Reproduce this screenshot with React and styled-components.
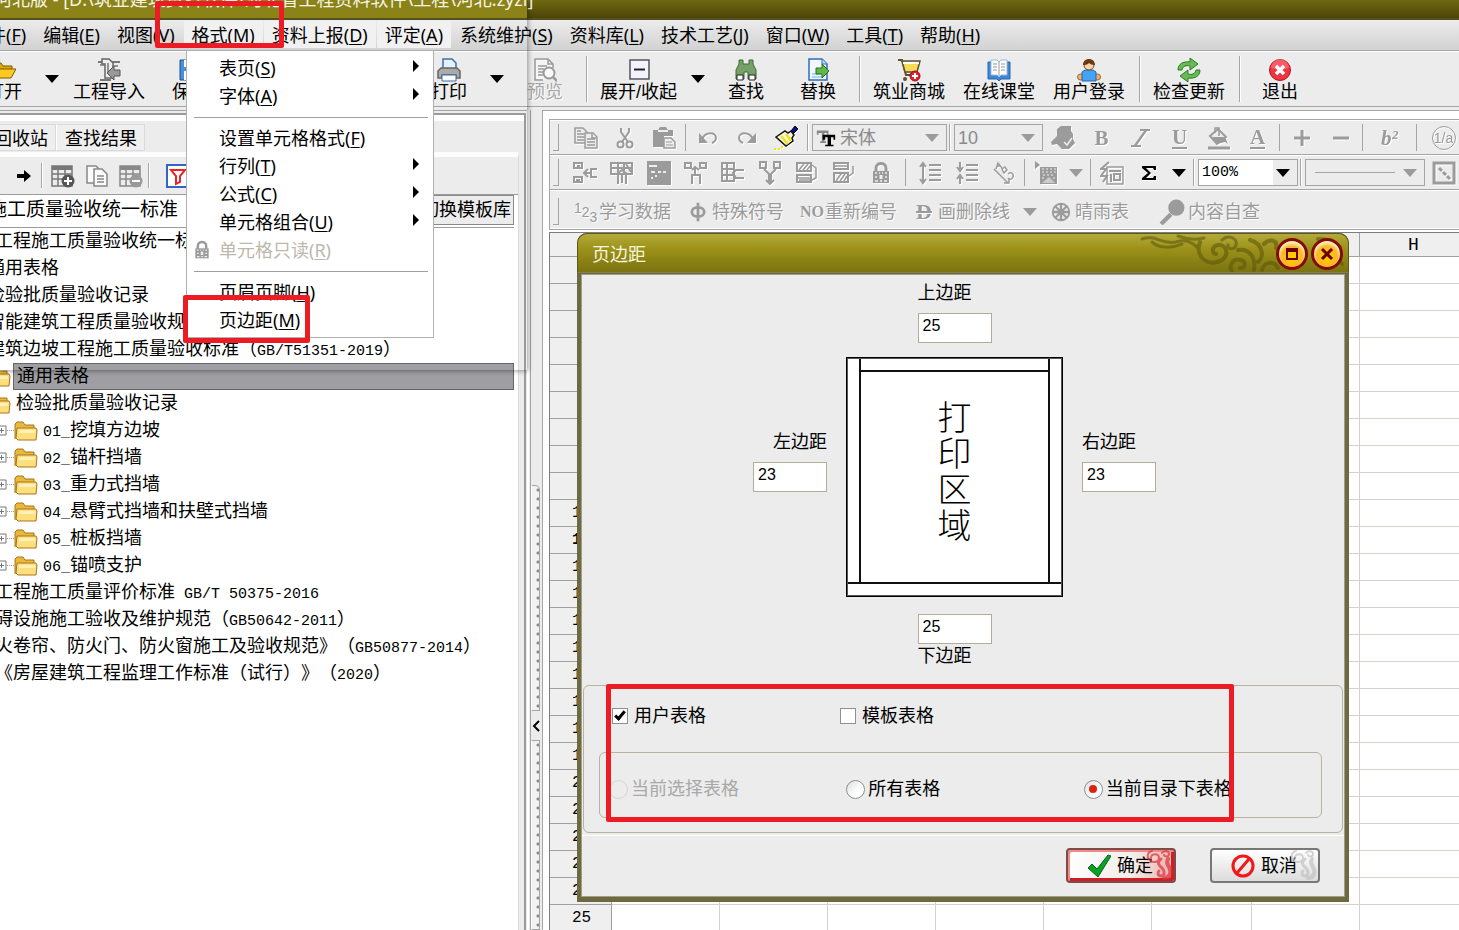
import { useState } from 'react';
import styled, { createGlobalStyle, css } from 'styled-components';

const GRAY = '#9b9b9b';
const sansFont = '"Noto Sans", "Noto Sans CJK SC", sans-serif';
const songFont = '"Liberation Sans", "Noto Sans CJK SC", sans-serif';
const monoFont = '"Liberation Mono", "Noto Sans CJK SC", monospace';

const glyphs = {
  open: (
    <>
      <path d='M1 20V5h8l2 3h9v4' fill='#e0a800' stroke='#7a5a00' />
      <path d='M1 20l4-9h19l-5 9z' fill='#ffc91f' stroke='#7a5a00' />
    </>
  ),
  importer: (
    <>
      <path d='M1 4h22M3 22h11' stroke='#777' strokeWidth='2' fill='none' />
      <path d='M5 1h7l4 4v15H8V6H5z' fill='#eee' stroke='#666' strokeWidth='1.5' />
      <path d='M11 5v9M3 7h5M16 8h5' stroke='#777' strokeWidth='1.5' />
      <path d='M23 12h-6V8l-7 7 7 7v-4h6z' fill='#999' stroke='#555' />
    </>
  ),
  save: (
    <>
      <path d='M2 2h17l3 3v17H2z' fill='#4a90d9' stroke='#1d4f93' />
      <path d='M6 2h11v7H6zM6 13h12v9H6z' fill='#fff' />
      <path d='M8 16h8M8 19h8' stroke='#3aa335' strokeWidth='2' />
    </>
  ),
  printer: (
    <>
      <path d='M6 11V1h9l4 4v6' fill='#e5f1fc' stroke='#3c6ea8' strokeWidth='1.5' />
      <path d='M1 20V13l3-3h16l3 3v7h-4v-3H5v3z' fill='#aaa' stroke='#666' strokeWidth='1.5' />
      <path d='M5 17h14v6H5z' fill='#f6fbff' stroke='#3c6ea8' />
    </>
  ),
  preview: (
    <g fill='none' stroke='#999' strokeWidth='1.5'>
      <path d='M10 22H2V1h13l5 5v4' fill='#f6f6f6' />
      <path d='M15 1v5h5M5 8h9M5 11h6M5 14h5M5 17h5' />
      <circle cx='16' cy='15' r='5.5' fill='#fafafa' strokeWidth='2' />
      <path d='M20 19l4 4' strokeWidth='2.5' />
    </g>
  ),
  collapse: (
    <>
      <path d='M3 2h19v19H3z' fill='#f3f3ff' stroke='#555' strokeWidth='1.5' />
      <path d='M7 11.5h11' stroke='#222' strokeWidth='2' />
    </>
  ),
  find: (
    <>
      <path d='M5 2h4v4h6V2h4v4l3 6v9h-8v-7h-4v7H2v-9l3-6z' fill='#76a26a' stroke='#41663a' />
      <path d='M3 17h6v5H3zM15 17h6v5h-6z' fill='#fff' stroke='#222' />
    </>
  ),
  replace: (
    <>
      <path d='M3 1h13l5 5v16H3z' fill='#f0f7ff' stroke='#2f6db5' strokeWidth='1.5' />
      <path d='M16 1v5h5' fill='#bcd9f7' stroke='#2f6db5' />
      <path d='M6 16h8M6 19h10' stroke='#a9d5f3' strokeWidth='2' />
      <path d='M10 10h6V6l7 7-7 7v-4h-6z' fill='#62b846' stroke='#24731c' />
    </>
  ),
  cart: (
    <>
      <path d='M1 2h4l4 15h12' fill='none' stroke='#5f5130' strokeWidth='2' />
      <path d='M5 3h18l-3 11H8z' fill='#f7dc58' stroke='#5f5130' strokeWidth='1.5' />
      <path d='M6 5h16' stroke='#fff' strokeWidth='2' />
      <circle cx='8' cy='21' r='2' fill='#5f5130' />
      <circle cx='18' cy='18' r='5' fill='#e3202b' stroke='#97101a' />
      <path d='M18 15v6M15 18h6' stroke='#fff' strokeWidth='2' />
    </>
  ),
  book: (
    <>
      <path d='M1 4h22v17H14l-2 2-2-2H1z' fill='#3d86d6' stroke='#2768b4' />
      <path d='M4 2h6l2 2 2-2h6v15h-6l-2 2-2-2H4z' fill='#fff' stroke='#9cb8d6' />
      <path d='M6 6h4M6 9h4M6 12h4M14 6h4M14 9h4M14 12h4M12 4v14' stroke='#999' />
    </>
  ),
  user: (
    <>
      <circle cx='3.5' cy='19' r='3' fill='#f0b16d' stroke='#a86526' />
      <circle cx='20.5' cy='19' r='3' fill='#f0b16d' stroke='#a86526' />
      <path d='M5 14l3-2h8l3 2v9H5z' fill='#45a3f5' stroke='#1c68ad' />
      <circle cx='12' cy='7' r='5' fill='#f8d5ab' stroke='#7d4a1c' />
      <path d='M6 7c0-8 12-8 12 0-3 0-5-1-6-2-2 2-4 2-6 2z' fill='#6b3a12' />
    </>
  ),
  refresh: (
    <g fill='#67bb53' stroke='#2c7a24' strokeLinejoin='round'>
      <path d='M1 12c0-6 5-9 12-8V0l8 6-8 6V8c-4-1-7 0-8 4z' />
      <path d='M23 12c0 6-5 9-12 8v4l-8-6 8-6v4c4 1 7 0 8-4z' />
    </g>
  ),
  exit: (
    <>
      <circle cx='12' cy='12' r='10.5' fill='#ef3340' stroke='#a91823' />
      <path d='M3 10a9 9 0 0118 0q-9 3-18 0z' fill='#ff7a80' opacity='.6' />
      <path d='M8 8l8 8M16 8l-8 8' stroke='#fff' strokeWidth='3.5' />
    </>
  ),
  arrow: <path d='M5 10h7V6l7 6-7 6v-4H5z' fill='#000' />,
  tableAdd: (
    <>
      <path d='M1 2h20v20H1zM1 5h20M1 10h20M1 15h20M7 6v16M14 6v16' fill='none' stroke='#777' strokeWidth='1.5' />
      <path d='M1 2h20v4H1z' fill='#777' />
      <circle cx='17' cy='17' r='6.5' fill='#555' />
      <path d='M17 13v8M13 17h8' stroke='#fff' strokeWidth='2' />
    </>
  ),
  tableRemove: (
    <>
      <path d='M1 2h20v20H1zM1 5h20M1 10h20M1 15h20M7 6v16M14 6v16' fill='none' stroke='#888' strokeWidth='1.5' />
      <path d='M1 2h20v4H1z' fill='#888' />
      <circle cx='17' cy='17' r='6.5' fill='#999' />
      <path d='M13 17h8' stroke='#fff' strokeWidth='2' />
    </>
  ),
  pages: (
    <g fill='#fafafa' stroke='#888' strokeWidth='1.5'>
      <path d='M2 2h9l3 3v14H2z' />
      <path d='M9 5h8l5 5v12H9z' />
      <path d='M12 12h7M12 15h7M12 18h7' />
    </g>
  ),
  filter: (
    <>
      <path d='M1 1h22v22H1z' fill='#fff' stroke='#3465c0' strokeWidth='2' />
      <path d='M5 6h14l-5 6v6l-4 2v-8z' fill='#fff' stroke='#e22' strokeWidth='2' />
    </>
  ),
  folder: (
    <>
      <path d='M1 20V5l2-2h6l2 3h9v3' fill='#e9b93c' stroke='#a8741a' />
      <path d='M3 9h19l1 2-1 10H4L2 19z' fill='#ffdf7d' stroke='#a8741a' />
      <path d='M5 11h16v3H5z' fill='#fff1b8' />
    </>
  ),
  lock: (
    <>
      <path d='M7 11V7c0-6 10-6 10 0v4' fill='none' stroke={GRAY} strokeWidth='3' />
      <path d='M4 10h16v12H4z' fill={GRAY} />
      <path d='M6 12h2m2 0h1m2 0h1m2 0h2M6 20h3m2 0h2m2 0h3M6 16h2m8 0h2' stroke='#eee' strokeWidth='1.5' />
      <path d='M12 14v4' stroke='#eee' strokeWidth='3' />
    </>
  ),
  copy: (
    <g fill='#ececec' stroke={GRAY} strokeWidth='1.5'>
      <path d='M1 2h8l4 4v11H1z' />
      <path d='M3 8h7M3 11h7M3 5h4M3 14h7' />
      <path d='M11 7h8l4 4v11H11z' />
      <path d='M13 13h8M13 16h8M13 19h8M18 7v5h5' />
    </g>
  ),
  cut: (
    <g fill='none' stroke={GRAY} strokeWidth='2'>
      <path d='M8 2v4l7 10M16 2v4L9 16' />
      <circle cx='7.5' cy='18.5' r='3' />
      <circle cx='16.5' cy='18.5' r='3' />
    </g>
  ),
  paste: (
    <>
      <path d='M1 4h5l2-3h6l2 3h5v6h-9v11H1z' fill={GRAY} />
      <path d='M6 5h10' stroke='#eee' strokeWidth='2' />
      <path d='M12 12h7l4 4v6H12z' fill='#eee' stroke={GRAY} strokeWidth='1.5' />
      <path d='M14 16h6M14 19h7' stroke={GRAY} />
    </>
  ),
  undo: (
    <>
      <path d='M6 13C10 5 20 6 20 12c0 3-2 4-4 5' fill='none' stroke={GRAY} strokeWidth='2' />
      <path d='M3 7v10h9z' fill={GRAY} />
    </>
  ),
  redo: (
    <>
      <path d='M18 13C14 5 4 6 4 12c0 3 2 4 4 5' fill='none' stroke={GRAY} strokeWidth='2' />
      <path d='M21 7v10h-9z' fill={GRAY} />
    </>
  ),
  brush: (
    <>
      <path d='M17 5l4-5 3 3-5 5z' fill='#0a0a8c' stroke='#000' />
      <path d='M2 11l9-6 3 2 3-2 3 4-2 3 1 3-7 5z' fill='#f7f7e0' stroke='#111' strokeWidth='1.5' />
      <path d='M7 10l7 8M12 8l5 7' stroke='#eee21a' strokeWidth='2.5' />
      <path d='M0 23h2m2 0h2m1-2h2' stroke='#f3e600' strokeWidth='2' />
    </>
  ),
  typeface: (
    <>
      <path d='M1 3h14v5h-2V6h-3v10h2v2H5v-2h2V6H3v2H1z' fill='#888' />
      <path d='M8 8h15v6h-2v-3h-3v9h3v2h-10v-2h3v-9h-3v3H8z' fill='#000' />
    </>
  ),
  hand: (
    <>
      <path d='M0 16l6-6V3l4-3h10v5l2 3v5l2 4-6 6h-7l-5-5-5 1z' fill={GRAY} />
      <path d='M13 16l3 3 5-7' fill='none' stroke='#eee' strokeWidth='1.5' />
    </>
  ),
  bucket: (
    <>
      <path d='M3 10l8-7 8 8-9 7z' fill='#eee' stroke={GRAY} strokeWidth='2' />
      <path d='M8 7V2h4v8' fill='none' stroke={GRAY} strokeWidth='1.5' />
      <path d='M5 11h13l3 7-3-2-8 2z' fill={GRAY} />
      <path d='M1 22h22' stroke={GRAY} strokeWidth='3' />
    </>
  ),
  plus: <path d='M12 4v16M4 12h16' stroke={GRAY} strokeWidth='3' />,
  minus: <path d='M4 12h16' stroke={GRAY} strokeWidth='3' />,
  italic: <path d='M11 3h10v2h-3L8 19h4v2H2v-2h3L15 5h-4z' fill={GRAY} />,
  insertCell: (
    <g fill='none' stroke={GRAY} strokeWidth='2'>
      <path d='M1 2h8v5H1zM1 16h8v5H1zM3 19h4M4 5h3M11 12h7M15 8l-4 4 4 4M24 8h-6v8h6' />
    </g>
  ),
  splitCell: (
    <g fill='none' stroke={GRAY} strokeWidth='2'>
      <path d='M1 2h21v11H1zM1 7h21M8 2v11M14 2v11M8 23V12l4-3 4 3v11M12 13v9M16 3l5 8' />
    </g>
  ),
  formBox: (
    <>
      <path d='M0 0h24v24H0z' fill={GRAY} />
      <path d='M2 5h8M4 11h4m3 0h3m2 0h3M4 17h2m2-2h2' stroke='#eee' strokeWidth='2' />
    </>
  ),
  colUp: (
    <g fill='none' stroke={GRAY} strokeWidth='2'>
      <path d='M1 2h6v5H1zM16 2h6v5h-6zM11 6v9M8 9l3-3 4 3M8 23v-9h8v9' />
    </g>
  ),
  gridLeft: (
    <g fill='none' stroke={GRAY} strokeWidth='2'>
      <path d='M1 2h12v18H1zM6 2v18M1 8h12M1 14h12M23 9h-8l-3 3 3 5h8' />
    </g>
  ),
  colDown: (
    <g fill='none' stroke={GRAY} strokeWidth='2'>
      <path d='M2 1h6v6H2zM16 1h6v6h-6zM6 8l5 5v9M18 8l-5 5v9M8 19l4 4 4-4' />
    </g>
  ),
  rowsUp: (
    <>
      <path d='M2 2h14v8H2zM2 14h14v7H2z' fill='none' stroke={GRAY} strokeWidth='2' />
      <path d='M4 9l5-6M8 9l5-6M12 9l3-4M3 17h12M4 19h12' stroke={GRAY} strokeWidth='1.5' />
      <path d='M17 4l4 3v10l-4 2' fill='none' stroke={GRAY} strokeWidth='1.5' />
    </>
  ),
  rowsDown: (
    <>
      <path d='M2 2h14v6H2zM2 12h14v9H2z' fill='none' stroke={GRAY} strokeWidth='2' />
      <path d='M3 5h12M4 20l5-7M8 20l5-7M12 20l3-5' stroke={GRAY} strokeWidth='1.5' />
      <path d='M17 15l4-3V5' fill='none' stroke={GRAY} strokeWidth='1.5' />
    </>
  ),
  spacingOut: (
    <g fill='none' stroke={GRAY} strokeWidth='2'>
      <path d='M5 3v18M2 6l3-4 3 4M2 18l3 4 3-4M11 4h12M11 9h12M11 14h12M11 19h12' />
    </g>
  ),
  spacingIn: (
    <g fill='none' stroke={GRAY} strokeWidth='2'>
      <path d='M5 1v8M2 6l3 4 3-4M5 23v-8M2 18l3-4 3 4M11 4h12M11 9h12M11 14h12M11 19h12' />
    </g>
  ),
  slant: (
    <>
      <path d='M2 8l14 14M17 17v5h-5' fill='none' stroke={GRAY} strokeWidth='1.5' />
      <path d='M4 8l2-6 4 5M5 5h4M10 8l3-2 2 3-3 3zM16 13c3-3 6 0 5 3s-4 3-5 1' fill='none' stroke={GRAY} strokeWidth='1.5' />
    </>
  ),
  picture: (
    <>
      <path d='M1 0l5 4-5 4z' fill={GRAY} />
      <path d='M6 6h17v17H6z' fill={GRAY} />
      <path d='M8 8h2m2 0h2m2 0h2m2 0h2M8 11h2m2 0h2m2 0h2m2 0h2M9 14h2m2 0h2m2 0h2M8 17h2m9 0h2' stroke='#eee' />
      <path d='M8 22l7-6 6 6' fill='#ccc' />
    </>
  ),
  formula: (
    <>
      <path d='M7 6h16v17H7z' fill='none' stroke={GRAY} strokeWidth='1.5' />
      <path d='M9 1L1 8h5l-5 7h6l-4 6M9 10h12M14 13h6v6h-6zM11 13v8' fill='none' stroke={GRAY} strokeWidth='2' />
    </>
  ),
  sigma: <path d='M5 5h14v4h-2l-1-2H9l5 5-5 5h7l1-2h2v4H5v-2l6-5-6-5z' fill='#000' />,
  diagonal: (
    <>
      <path d='M2 2h20v20H2z' fill='none' stroke={GRAY} strokeWidth='3' />
      <path d='M7 7l3 3m1 1l3 3m1 1l3 3' stroke={GRAY} strokeWidth='3' />
    </>
  ),
  phi: <path d='M12 2v20M12 7c-9 0-9 10 0 10s9-10 0-10z' fill='none' stroke={GRAY} strokeWidth='3' />,
  ball: (
    <>
      <circle cx='12' cy='12' r='9' fill='none' stroke={GRAY} strokeWidth='2' />
      <path d='M12 3v18M3 12h18M6 6l12 12M18 6L6 18' stroke={GRAY} strokeWidth='2.5' />
    </>
  ),
  magnifier: (
    <>
      <circle cx='16' cy='8' r='7.5' fill={GRAY} />
      <path d='M11 14l-9 9' stroke={GRAY} strokeWidth='4' />
    </>
  ),
  check: <path d='M1 14l4-4 5 5L21 1l3 1-13 21z' fill='#0aa31a' stroke='#0b5f3a' />,
  forbid: (
    <g fill='none' stroke='#f01818' strokeWidth='3'>
      <circle cx='12' cy='12' r='10' />
      <path d='M18 5L6 19' />
    </g>
  ),
};

const Icon = ({ name, size = 24 }) => (
  <svg width={size} height={size} viewBox='0 0 24 24' aria-hidden='true'>
    {glyphs[name]}
  </svg>
);

const Caret = ({ color = '#000' }) => (
  <svg width='14' height='8' viewBox='0 0 14 8' aria-hidden='true'>
    <path d='M0 0h14L7 8z' fill={color} />
  </svg>
);

const menus = [
  ['文件', 'F'],
  ['编辑', 'E'],
  ['视图', 'V'],
  ['格式', 'M', true],
  ['资料上报', 'D', true],
  ['评定', 'A', true],
  ['系统维护', 'S'],
  ['资料库', 'L'],
  ['技术工艺', 'J'],
  ['窗口', 'W'],
  ['工具', 'T'],
  ['帮助', 'H'],
];

const formatMenu = [
  { text: '表页', hot: 'S', sub: true },
  { text: '字体', hot: 'A', sub: true },
  null,
  { text: '设置单元格格式', hot: 'F' },
  { text: '行列', hot: 'T', sub: true },
  { text: '公式', hot: 'C', sub: true },
  { text: '单元格组合', hot: 'U', sub: true },
  { text: '单元格只读', hot: 'R', disabled: true, icon: 'lock' },
  null,
  { text: '页眉页脚', hot: 'H' },
  { text: '页边距', hot: 'M' },
];

const treeRows = [
  { depth: 0, text: '建筑工程施工质量验收统一标准' },
  { depth: 1, text: '通用表格' },
  { depth: 1, text: '检验批质量验收记录' },
  { depth: 1, text: '智能建筑工程质量验收规范' },
  { depth: 1, text: '建筑边坡工程施工质量验收标准（GB/T51351-2019）' },
  { depth: 1, text: '通用表格', folder: true, selected: true },
  { depth: 1, text: '检验批质量验收记录', folder: true },
  { depth: 2, text: '01_挖填方边坡', folder: true, expander: true },
  { depth: 2, text: '02_锚杆挡墙', folder: true, expander: true },
  { depth: 2, text: '03_重力式挡墙', folder: true, expander: true },
  { depth: 2, text: '04_悬臂式挡墙和扶壁式挡墙', folder: true, expander: true },
  { depth: 2, text: '05_桩板挡墙', folder: true, expander: true },
  { depth: 2, text: '06_锚喷支护', folder: true, expander: true },
  { depth: 0, text: '建筑工程施工质量评价标准 GB/T 50375-2016' },
  { depth: 0, text: '无障碍设施施工验收及维护规范（GB50642-2011）' },
  { depth: 0, text: '《防火卷帘、防火门、防火窗施工及验收规范》（GB50877-2014）' },
  { depth: 0, text: '河北《房屋建筑工程监理工作标准（试行）》（2020）' },
];

const columns = ['A', 'B', 'C', 'D', 'E', 'F', 'G', 'H', 'I'];
const rowNumbers = Array.from({ length: 30 }, (_, i) => i + 1);

// half-width runs are set in the mono face so they take half a hanzi each
const MixedText = ({ children }) =>
  children.split(/([\x20-\x7e]+)/).map((part, i) => (i % 2 ? <HalfWidth key={i}>{part}</HalfWidth> : part));

const BigTool = ({ icon, label, disabled, className }) => (
  <BigButton type='button' disabled={disabled} className={className}>
    <Icon name={icon} />
    {label}
  </BigButton>
);

const DropArrow = ({ label, color }) => (
  <ArrowButton type='button' aria-label={label}>
    <Caret color={color} />
  </ArrowButton>
);

const Tool = ({ icon, label, children, wide }) => (
  <SmallButton type='button' aria-label={label} $wide={wide}>
    {icon ? <Icon name={icon} /> : children}
  </SmallButton>
);

const Field = ({ id, label, value, onChange, below, side, alignEnd }) => (
  <FieldBox $below={below} $side={side} $alignEnd={alignEnd}>
    <label htmlFor={id}>{label}</label>
    <input id={id} value={value} onChange={(e) => onChange(id, e.target.value)} autoComplete='off' />
  </FieldBox>
);

const MarginDialog = () => {
  const [margins, setMargins] = useState({ top: '25', left: '23', right: '23', bottom: '25' });
  const [userSheet, setUserSheet] = useState(true);
  const [templateSheet, setTemplateSheet] = useState(false);
  const [scope, setScope] = useState('folder');

  function handleMargin(id, value) {
    setMargins({ ...margins, [id]: value });
  }

  return (
    <Dialog role='dialog' aria-label='页边距'>
      <DialogTitle>
        <h2>页边距</h2>
        <svg className='cloud' width='210' height='38' viewBox='0 0 210 38' aria-hidden='true'>
          <g fill='none' stroke='#5f590c' strokeLinecap='round' opacity='.6'>
            <path d='M4 5c14-5 20 6 34 3 10-3 16 0 22 6' strokeWidth='3' />
            <path d='M14 8c8 7 20 6 30 2M40 2c10 4 18 4 26 2' strokeWidth='3' />
            <path d='M62 8c-6 16 10 26 22 18 8-6 4-16-4-15-6 1-7 8-2 9' strokeWidth='4' />
            <path d='M84 6c6-6 16-2 14 5-2 6-9 4-8 0' strokeWidth='3' />
            <path d='M94 38c-4-8 2-14 9-12 6 2 4 9-1 8M100 16c10-2 18 6 16 20' strokeWidth='4' />
            <path d='M112 6c14 4 14 18 8 22M124 36c2-8 12-10 16-2M126 10c6-6 14-4 12 4' strokeWidth='4' />
            <path d='M186 32c4-8 14-8 18-2M180 5c10 0 16 3 22 8' strokeWidth='4' />
          </g>
        </svg>
        <RoundButton type='button' aria-label='最大化'>
          <svg width='14' height='14' viewBox='0 0 14 14'>
            <path d='M2 2h10v10H2zM2 4h10' fill='none' stroke='#6b0000' strokeWidth='2' />
          </svg>
        </RoundButton>
        <RoundButton type='button' aria-label='关闭'>
          <svg width='14' height='14' viewBox='0 0 14 14'>
            <path d='M2 2l10 10M12 2L2 12' stroke='#6b0000' strokeWidth='3' />
          </svg>
        </RoundButton>
      </DialogTitle>
      <DialogBody>
        <MarginGrid>
          <div />
          <Field id='top' label='上边距' value={margins.top} onChange={handleMargin} />
          <div />
          <Field id='left' label='左边距' value={margins.left} onChange={handleMargin} side alignEnd />
          <PaperPreview>
            <div className='strip left' />
            <div className='strip top' />
            <div className='strip right' />
            <div className='area'>
              <span>打印区域</span>
            </div>
            <div className='strip bottom' />
          </PaperPreview>
          <Field id='right' label='右边距' value={margins.right} onChange={handleMargin} side />
          <div />
          <Field id='bottom' label='下边距' value={margins.bottom} onChange={handleMargin} below />
          <div />
        </MarginGrid>
        <Group>
          <CheckRow>
            <Choice>
              <input type='checkbox' checked={userSheet} onChange={() => setUserSheet(!userSheet)} />
              用户表格
            </Choice>
            <Choice>
              <input type='checkbox' checked={templateSheet} onChange={() => setTemplateSheet(!templateSheet)} />
              模板表格
            </Choice>
          </CheckRow>
          <RadioGroup>
            <Choice $disabled>
              <input type='radio' name='scope' disabled />
              当前选择表格
            </Choice>
            <Choice>
              <input type='radio' name='scope' checked={scope === 'all'} onChange={() => setScope('all')} />
              所有表格
            </Choice>
            <Choice>
              <input type='radio' name='scope' checked={scope === 'folder'} onChange={() => setScope('folder')} />
              当前目录下表格
            </Choice>
          </RadioGroup>
        </Group>
        <DialogFooter>
          <DialogButton type='button' $primary>
            <Icon name='check' />
            确定
            <Curl color='#d8323a' />
          </DialogButton>
          <DialogButton type='button'>
            <Icon name='forbid' />
            取消
            <Curl color='#c2c2c2' />
          </DialogButton>
        </DialogFooter>
      </DialogBody>
    </Dialog>
  );
};

const Curl = ({ color }) => (
  <svg className='curl' width='30' height='30' viewBox='0 0 30 30' aria-hidden='true'>
    <g fill='none' stroke={color} strokeLinecap='round'>
      <path d='M7 8c0-5 8-5 8 0 0 4-5 5-8 3-5-3-4-9 1-10' strokeWidth='2' />
      <path d='M18 3c2-3 7-2 7 1s-4 3-5 1' strokeWidth='2' />
      <path d='M17 9c-4 3-3 6 1 9 3 3 3 8-1 8-3 0-4-3-2-5' strokeWidth='3' />
      <path d='M24 9c-2 3-1 5 1 8 3 5 1 11-5 11' strokeWidth='4' />
    </g>
  </svg>
);

const App = () => {
  const [font, setFont] = useState('宋体');
  const [zoom, setZoom] = useState('100%');

  return (
    <Shell>
      <GlobalStyle />
      <TitleBar>
        <h1>河北版 - [D:\筑业建筑资料软件\河北省工程资料软件\工程\河北.zyzl]</h1>
      </TitleBar>
      <MenuBar>
        {menus.map(([text, hot, lit]) => (
          <MenuButton key={hot} type='button' $lit={lit}>
            {text}(<u>{hot}</u>)
          </MenuButton>
        ))}
      </MenuBar>

      <MainToolbar>
        <BigTool icon='open' label='打开' />
        <DropArrow label='打开选项' />
        <BigTool icon='importer' label='工程导入' />
        <BigTool icon='save' label='保存' />
        <BigTool icon='printer' label='打印' className='print' />
        <DropArrow label='打印选项' />
        <BigTool icon='preview' label='预览' disabled />
        <Divider />
        <BigTool icon='collapse' label='展开/收起' />
        <DropArrow label='展开选项' />
        <BigTool icon='find' label='查找' />
        <BigTool icon='replace' label='替换' />
        <Divider />
        <BigTool icon='cart' label='筑业商城' />
        <BigTool icon='book' label='在线课堂' />
        <BigTool icon='user' label='用户登录' />
        <Divider />
        <BigTool icon='refresh' label='检查更新' />
        <Divider />
        <BigTool icon='exit' label='退出' />
      </MainToolbar>

      <Workspace>
        <LeftPanel>
          <div className='frame'>
            <Tabs>
              <button type='button'>回收站</button>
              <button type='button'>查找结果</button>
            </Tabs>
            <TabPage>
              <TreeTools>
                <button type='button' aria-label='前进'>
                  <Icon name='arrow' />
                </button>
                <Divider />
                <button type='button' aria-label='添加表格'>
                  <Icon name='tableAdd' />
                </button>
                <button type='button' aria-label='复制表格'>
                  <Icon name='pages' />
                </button>
                <button type='button' aria-label='删除表格'>
                  <Icon name='tableRemove' />
                </button>
                <Divider />
                <button type='button' aria-label='筛选'>
                  <Icon name='filter' />
                </button>
              </TreeTools>
              <LibraryRow>
                <select aria-label='模板库'>
                  <option>施工质量验收统一标准</option>
                </select>
                <button type='button'>切换模板库</button>
              </LibraryRow>
              <Tree>
                {treeRows.map((row, i) => (
                  <TreeRow key={i} $depth={row.depth}>
                    {row.expander && (
                      <svg className='expander' width='18' height='12' viewBox='0 0 18 12' aria-hidden='true'>
                        <path d='M1 1h9v9H1zM3 5.5h5M5.5 3v5' fill='none' stroke='#777' />
                        <path d='M11 5.5h7' stroke='#999' strokeDasharray='1 1' />
                      </svg>
                    )}
                    {row.folder && <Icon name='folder' />}
                    <TreeLabel $folder={row.folder} $selected={row.selected}>
                      <MixedText>{row.text}</MixedText>
                    </TreeLabel>
                  </TreeRow>
                ))}
              </Tree>
            </TabPage>
          </div>
        </LeftPanel>

        <Splitter>
          <div className='grip' />
          <button type='button' aria-label='收起面板'>
            <svg width='8' height='12' viewBox='0 0 8 12'>
              <path d='M7 1L2 6l5 5' fill='none' stroke='#000' strokeWidth='2' />
            </svg>
          </button>
          <div className='grip rest' />
        </Splitter>

        <RightPanel>
          <FormatTools>
            <ToolRow $slot={39}>
              <Handle />
              <Tool icon='copy' label='复制' />
              <Tool icon='cut' label='剪切' />
              <Tool icon='paste' label='粘贴' />
              <ThinLine />
              <Tool icon='undo' label='撤消' />
              <Tool icon='redo' label='重做' />
              <Tool icon='brush' label='格式刷' />
              <ThinLine $double />
              <Combo $width={135} $icon>
                <Icon name='typeface' size={20} />
                <select aria-label='字体' value={font} onChange={(e) => setFont(e.target.value)}>
                  <option>宋体</option>
                </select>
                <Caret color={GRAY} />
              </Combo>
              <ThinLine $double />
              <Combo $width={89}>
                <select aria-label='字号'>
                  <option>10</option>
                </select>
                <Caret color={GRAY} />
              </Combo>
              <Tool icon='hand' label='文字颜色' />
              <Tool label='加粗'>
                <Letter $bold>B</Letter>
              </Tool>
              <Tool icon='italic' label='倾斜' />
              <Tool label='下划线'>
                <Letter $bold $line>
                  U
                </Letter>
              </Tool>
              <Tool icon='bucket' label='填充' />
              <Tool label='字色'>
                <Letter $bold $line>
                  A
                </Letter>
              </Tool>
              <ThinLine />
              <Tool icon='plus' label='增大' />
              <Tool icon='minus' label='减小' />
              <ThinLine />
              <Tool label='上标' wide>
                <Letter $bold $italic>
                  b²
                </Letter>
              </Tool>
              <ThinLine />
              <Tool label='分数' wide>
                <Fraction>1/a</Fraction>
              </Tool>
            </ToolRow>
            <ToolRow $slot={37}>
              <Handle />
              <Tool icon='insertCell' label='插入单元格' />
              <Tool icon='splitCell' label='拆分单元格' />
              <Tool icon='formBox' label='表单' />
              <Tool icon='colUp' label='插入列' />
              <Tool icon='gridLeft' label='插入行' />
              <Tool icon='colDown' label='追加列' />
              <Tool icon='rowsUp' label='上移行' />
              <Tool icon='rowsDown' label='下移行' />
              <Tool icon='lock' label='只读' />
              <ThinLine $roomy />
              <Tool icon='spacingOut' label='增大行距' />
              <Tool icon='spacingIn' label='减小行距' />
              <Tool icon='slant' label='旋转文字' />
              <ThinLine />
              <Tool icon='picture' label='图片' />
              <DropArrow label='图片选项' color={GRAY} />
              <ThinLine />
              <Tool icon='formula' label='公式' />
              <Tool icon='sigma' label='求和' />
              <DropArrow label='求和选项' />
              <ThinLine $double />
              <Combo $width={100} $active>
                <select aria-label='缩放' value={zoom} onChange={(e) => setZoom(e.target.value)}>
                  <option>100%</option>
                </select>
                <Caret />
              </Combo>
              <ThinLine $double />
              <Combo $width={120} $rule>
                <select aria-label='线型'>
                  <option> </option>
                </select>
                <Caret color={GRAY} />
              </Combo>
              <Tool icon='diagonal' label='斜线' />
            </ToolRow>
            <ToolRow $words>
              <Handle />
              <WordButton type='button'>
                <Digits>
                  <sup>1</sup>2<sub>3</sub>
                </Digits>
                学习数据
              </WordButton>
              <WordButton type='button'>
                <Icon name='phi' size={22} />
                特殊符号
              </WordButton>
              <WordButton type='button'>
                <Stamp>NO</Stamp>
                重新编号
              </WordButton>
              <WordButton type='button'>
                <Stamp $struck>D</Stamp>
                画删除线
              </WordButton>
              <DropArrow label='删除线选项' color={GRAY} />
              <WordButton type='button'>
                <Icon name='ball' size={22} />
                晴雨表
              </WordButton>
              <WordButton type='button' $last>
                <Icon name='magnifier' size={26} />
                内容自查
              </WordButton>
            </ToolRow>
          </FormatTools>
          <Sheet>
            <table>
              <colgroup>
                <col className='corner' />
                {columns.map((name) => (
                  <col key={name} className={name === 'F' ? 'narrow' : 'normal'} />
                ))}
              </colgroup>
              <thead>
                <tr>
                  <th />
                  {columns.map((name) => (
                    <th key={name} scope='col'>
                      {name}
                    </th>
                  ))}
                </tr>
              </thead>
              <tbody>
                {rowNumbers.map((n) => (
                  <SheetRow key={n} $current={n === 11}>
                    <th scope='row'>{n}</th>
                    {columns.map((name) => (
                      <td key={name} />
                    ))}
                  </SheetRow>
                ))}
              </tbody>
            </table>
          </Sheet>
        </RightPanel>
      </Workspace>

      <SnapEdge />
      <PopupMenu>
        {formatMenu.map((item, i) =>
          item ? (
            <PopupItem key={i} type='button' disabled={item.disabled}>
              <span className='mark'>{item.icon && <Icon name={item.icon} size={20} />}</span>
              {item.text}(<u>{item.hot}</u>)
              {item.sub && (
                <svg className='more' width='8' height='12' viewBox='0 0 8 12' aria-hidden='true'>
                  <path d='M1 0l6 6-6 6z' />
                </svg>
              )}
            </PopupItem>
          ) : (
            <PopupLine key={i} />
          )
        )}
      </PopupMenu>
      <MarginDialog />
      <RedBox $left={155} $top={1} $width={129} $height={47} />
      <RedBox $left={183} $top={295} $width={127} $height={48} />
      <RedBox $left={606} $top={684} $width={628} $height={138} />
    </Shell>
  );
};

const GlobalStyle = createGlobalStyle`
  *, *::before, *::after {
    box-sizing: border-box;
  }
  body {
    margin: 0;
    background: #ececec;
    color: #000;
    font: 18px/24px ${songFont};
    text-spacing-trim: space-all;
  }
  button, select, input {
    margin: 0;
    padding: 0;
    border: 0;
    background: none;
    color: inherit;
    font: inherit;
    white-space: nowrap;
  }
  svg {
    display: block;
    flex: none;
  }
`;

const Shell = styled.div`
  position: relative;
  display: flex;
  flex-direction: column;
  height: 100vh;
  overflow: hidden;
`;

const TitleBar = styled.header`
  display: flex;
  align-items: flex-end;
  height: 20px;
  flex: none;
  overflow: hidden;
  border-bottom: 2px solid #55501f;
  background: linear-gradient(90deg, #8c8318 527px, transparent 527px), linear-gradient(#6f6811, #4b4408);
  h1 {
    margin: 0 0 7px -6px;
    color: #f4f4e6;
    font: 400 18px/24px ${sansFont};
    white-space: pre;
  }
`;

const MenuBar = styled.nav`
  display: flex;
  gap: 1px;
  height: 31px;
  flex: none;
  padding: 1px 0 2px;
  margin-left: -38px;
  border-bottom: 1px solid #a5a5a5;
  background: linear-gradient(#ececec, #d2d2d2);
`;

const MenuButton = styled.button`
  padding: 0 8px;
  font: 18px/26px ${sansFont};
  background: ${(props) => props.$lit && '#f1f1f1'};
  u {
    text-underline-offset: 2px;
  }
`;

const MainToolbar = styled.div`
  display: flex;
  height: 56px;
  flex: none;
  margin-left: -32px;
  border-top: 1px solid #fff;
  border-bottom: 1px solid #a5a5a5;
  .print {
    margin-left: 187px;
  }
`;

const BigButton = styled.button`
  display: flex;
  flex-direction: column;
  align-items: center;
  min-width: 72px;
  padding: 6px 9px 0;
  line-height: 20px;
  &:disabled {
    color: #a8a8a8;
    text-shadow: 1px 1px #fff;
  }
`;

const ArrowButton = styled.button`
  display: flex;
  align-items: center;
  justify-content: center;
  width: 24px;
  flex: none;
`;

const Divider = styled.span`
  width: 10px;
  flex: none;
  margin: 4px 0;
  background: linear-gradient(90deg, transparent 5px, #a5a5a5 5px, #a5a5a5 6px, #fff 6px, #fff 7px, transparent 7px);
`;

const Workspace = styled.main`
  display: flex;
  flex: 1;
  min-height: 0;
  padding-top: 3px;
`;

const LeftPanel = styled.section`
  width: 527px;
  flex: none;
  padding: 2px 1px 0 0;
  border-top: 1px solid #a5a5a5;
  overflow: hidden;
  .frame {
    display: flex;
    flex-direction: column;
    height: 100%;
    padding: 6px 5px 0 0;
    border: solid #9b9b9b;
    border-width: 2px 2px 0 0;
    background: linear-gradient(#fff 6px, #ececec 6px);
  }
`;

const Tabs = styled.div`
  display: flex;
  height: 31px;
  padding-top: 3px;
  margin-left: -15px;
  button {
    height: 27px;
    padding: 2px 7px 0 8px;
    border: 1px solid #dadada;
    border-left-color: #fff;
    background: #efefef;
  }
`;

const TabPage = styled.div`
  display: flex;
  flex-direction: column;
  flex: 1;
  min-height: 0;
  padding-right: 4px;
  border-top: 5px solid #fdfdfd;
  border-right: 1px solid #dadada;
  background: #fff;
`;

const TreeTools = styled.div`
  display: flex;
  align-items: center;
  height: 38px;
  flex: none;
  padding-left: 7px;
  margin-right: -4px;
  border-bottom: 1px solid #9b9b9b;
  background: #ececec;
  button {
    display: flex;
    justify-content: center;
    width: 34px;
  }
  button:last-child {
    margin-left: 8px;
  }
  ${Divider} {
    align-self: stretch;
    margin: 6px 0 6px -5px;
  }
`;

const LibraryRow = styled.div`
  display: flex;
  align-items: flex-start;
  height: 33px;
  flex: none;
  border-bottom: 1px solid #9b9b9b;
  select {
    flex: 1;
    margin-left: -12px;
    height: 30px;
    appearance: none;
    font-size: 19px;
  }
  button {
    height: 30px;
    padding: 0 2px;
    border: 1px solid #8a8a8a;
    background: #ececec;
  }
`;

const Tree = styled.div`
  flex: 1;
  min-height: 0;
  overflow: hidden;
`;

const TreeRow = styled.div`
  display: flex;
  align-items: center;
  height: 27px;
  white-space: pre;
  margin-left: ${(props) => [-41, -13, 14][props.$depth]}px;
  .expander {
    margin-left: -18px;
  }
`;

const TreeLabel = styled.span`
  line-height: 25px;
  margin-left: ${(props) => props.$folder && '2px'};
  padding-left: ${(props) => props.$folder && '3px'};
  ${(props) =>
    props.$selected &&
    css`
      flex: 1;
      border: 1px solid #66666a;
      background: #9f9fa3;
    `}
`;

const HalfWidth = styled.span`
  font: 15px/20px ${monoFont};
`;

const Splitter = styled.div`
  display: flex;
  flex-direction: column;
  width: 16px;
  flex: none;
  padding: 375px 2px 0 4px;
  border-right: 1px solid #a5a5a5;
  background: linear-gradient(90deg, #fff 2px, #ececec 2px, #ececec 3px, #a5a5a5 3px, #a5a5a5 4px, #ececec 4px);
  .grip {
    height: 226px;
    flex: none;
    border: 1px solid #a5a5a5;
    border-left-color: #fff;
    border-radius: 0 5px 0 0;
    background: radial-gradient(circle at 6px 4px, #8a8a8a 1px, #f2f2f2 2px) 0 0 / 10px 9px;
  }
  .rest {
    flex: 1;
    border-radius: 0;
  }
  button {
    display: flex;
    align-items: center;
    justify-content: center;
    height: 29px;
    flex: none;
  }
`;

const RightPanel = styled.section`
  display: flex;
  flex-direction: column;
  flex: 1;
  min-width: 0;
  padding: 8px 0 0 6px;
  border-top: 1px solid #a5a5a5;
  background: #fff;
`;

const FormatTools = styled.div`
  flex: none;
  border: 1px solid #a5a5a5;
  border-right: 0;
  background: #ececec;
  color: ${GRAY};
`;

const ToolRow = styled.div`
  display: flex;
  align-items: center;
  height: ${(props) => (props.$words ? 39 : 35)}px;
  padding: ${(props) => (props.$words ? 4 : 0)}px 0 0 3px;
  overflow: hidden;
  border-bottom: ${(props) => (props.$words ? '1px solid #fff' : '1px solid #a5a5a5')};
  border-top: 1px solid #fff;
  --slot: ${(props) => props.$slot}px;
`;

const Handle = styled.span`
  width: 6px;
  height: 27px;
  flex: none;
  margin-right: 7px;
  border: solid #a5a5a5;
  border-width: 0 1px 1px 0;
`;

const ThinLine = styled.span`
  width: ${(props) => (props.$double ? 7 : props.$roomy ? 12 : 5)}px;
  height: 27px;
  flex: none;
  background: ${(props) =>
    props.$double
      ? 'linear-gradient(90deg, transparent 2px, #a5a5a5 2px, #a5a5a5 3px, #fff 3px, #fff 4px, transparent 4px)'
      : 'linear-gradient(#a5a5a5, #a5a5a5) center / 1px 100% no-repeat'};
`;

const SmallButton = styled.button`
  display: flex;
  justify-content: center;
  width: ${(props) => (props.$wide ? '49px' : 'var(--slot)')};
  flex: none;
  filter: drop-shadow(1px 1px #fff);
`;

const Combo = styled.span`
  display: flex;
  align-items: center;
  width: ${(props) => props.$width}px;
  height: 27px;
  flex: none;
  padding: 0 7px 0 3px;
  border: 1px solid #a5a5a5;
  background: ${(props) =>
    props.$active
      ? 'linear-gradient(90deg, #fff 74px, #ececec 74px)'
      : props.$rule
        ? 'linear-gradient(#a5a5a5, #a5a5a5) 9px 12px / 80px 1px no-repeat'
        : 'none'};
  color: ${(props) => (props.$active ? '#000' : '#8a8a8a')};
  select {
    flex: 1;
    min-width: 0;
    appearance: none;
    margin-left: ${(props) => props.$icon && '4px'};
    font: ${(props) => (props.$active ? `15px/24px ${monoFont}` : `18px/24px ${songFont}`)};
  }
`;

const Letter = styled.span`
  font: ${(props) => (props.$italic ? 'italic' : 'normal')} ${(props) => (props.$bold ? 700 : 400)} 21px/20px
    'Liberation Serif', serif;
  border-bottom: ${(props) => props.$line && `2px solid ${GRAY}`};
`;

const Fraction = styled.span`
  width: 24px;
  height: 24px;
  border: 1px solid ${GRAY};
  border-radius: 50%;
  font-size: 14px;
  line-height: 22px;
`;

const WordButton = styled.button`
  display: flex;
  align-items: center;
  gap: 3px;
  margin: 0 8px;
  margin-left: ${(props) => props.$last && '22px'};
  text-shadow: 1px 1px #fff;
`;

const Digits = styled.span`
  display: flex;
  align-items: center;
  width: 22px;
  font-size: 14px;
  line-height: 14px;
  sup,
  sub {
    font-size: 14px;
    line-height: 14px;
  }
  sup {
    padding-bottom: 8px;
  }
  sub {
    padding-top: 10px;
  }
`;

const Stamp = styled.span`
  width: 22px;
  font: 700 ${(props) => (props.$struck ? 22 : 16)}px/24px 'Liberation Serif', serif;
  text-align: center;
  text-decoration: ${(props) => props.$struck && 'line-through'};
`;

const Sheet = styled.div`
  flex: 1;
  min-height: 0;
  margin-top: 2px;
  overflow: hidden;
  border: solid #7d7d7d;
  border-width: 1px 0 0 1px;
  table {
    width: 1026px;
    table-layout: fixed;
    border-spacing: 0;
    font: 16px/20px ${monoFont};
  }
  .corner {
    width: 62px;
  }
  .normal {
    width: 108px;
  }
  .narrow {
    width: 100px;
  }
  th,
  td {
    height: 27px;
    padding: 0;
    border: solid #d6d2ca;
    border-width: 0 1px 1px 0;
  }
  th {
    border-color: #a0a0a0;
    background: #efefef;
    font-weight: 400;
  }
  thead th {
    height: 24px;
    font-size: 18px;
  }
`;

const SheetRow = styled.tr`
  && th {
    padding-left: 2px;
    font-weight: ${(props) => props.$current && 700};
  }
`;

// edge of the lifted layer around the open menu
const SnapEdge = styled.div`
  position: absolute;
  top: 0;
  left: 0;
  width: 527px;
  height: 370px;
  box-shadow: 1px 1px 5px rgba(0, 0, 0, 0.4);
  pointer-events: none;
`;

const PopupMenu = styled.div`
  position: absolute;
  top: 50px;
  left: 186px;
  width: 248px;
  padding: 3px 0;
  border: 1px solid #b0b0b0;
  background: #fff;
`;

const PopupItem = styled.button`
  display: flex;
  align-items: center;
  width: 100%;
  height: 28px;
  font-family: ${sansFont};
  &:disabled {
    color: #bdb8ac;
  }
  .mark {
    width: 32px;
    padding-left: 5px;
  }
  .more {
    margin: 0 13px 4px auto;
  }
  u {
    text-underline-offset: 2px;
  }
`;

const PopupLine = styled.div`
  height: 14px;
  margin: 0 5px 0 7px;
  background: linear-gradient(#a0a0a0, #a0a0a0) center / 100% 1px no-repeat;
`;

const Dialog = styled.section`
  position: absolute;
  top: 233px;
  left: 577px;
  width: 772px;
  border-radius: 10px 10px 0 0;
  background: #6d6a41;
`;

const DialogTitle = styled.header`
  position: relative;
  display: flex;
  align-items: center;
  gap: 3px;
  height: 40px;
  padding: 2px 5px 0 14px;
  overflow: hidden;
  border: 1px solid #5c5820;
  border-bottom-color: #837e50;
  border-radius: 10px 10px 0 0;
  background: linear-gradient(#b3aa3a, #9b9119 40%, #7b7310);
  h2 {
    flex: 1;
    margin: 0;
    color: #f6f6dc;
    font: 400 18px/24px ${sansFont};
  }
  .cloud {
    position: absolute;
    top: 0;
    right: 0;
  }
`;

const RoundButton = styled.button`
  position: relative;
  display: flex;
  align-items: center;
  justify-content: center;
  width: 32px;
  height: 32px;
  border: 3px solid #850a0a;
  border-radius: 50%;
  background: radial-gradient(circle at 50% 60%, #ffc800 20%, #ffb52a 50%, #ffedb8 70%);
`;

const DialogBody = styled.div`
  margin: 2px 5px 6px;
  padding-top: 6px;
  background: #ececec;
  box-shadow: 0 0 0 1px #a19f84;
`;

const MarginGrid = styled.div`
  display: grid;
  grid-template-columns: 74px 217px 74px;
  gap: 14px 19px;
  justify-content: center;
  padding-right: 17px;
`;

const FieldBox = styled.div`
  display: flex;
  flex-direction: ${(props) => (props.$below ? 'column-reverse' : 'column')};
  align-items: ${(props) => (props.$alignEnd ? 'flex-end' : 'flex-start')};
  gap: ${(props) => (props.$below ? 0 : 8)}px;
  align-self: center;
  justify-self: center;
  padding-top: ${(props) => props.$below && '3px'};
  padding-bottom: ${(props) => props.$side && '32px'};
  input {
    width: 74px;
    height: 30px;
    padding: 0 4px 4px;
    border: 1px solid #b3ac98;
    background: #fff;
    font-size: 16px;
  }
`;

const PaperPreview = styled.div`
  display: grid;
  grid-template-columns: 14px 1fr 14px;
  grid-template-rows: 14px 1fr 14px;
  height: 240px;
  border: 1px solid #000;
  outline: 1px solid #555;
  outline-offset: -2px;
  background: #fff;
  .strip {
    border: 0 solid #111;
  }
  .left {
    grid-row: 1 / 3;
    border-right-width: 2px;
  }
  .top {
    border-bottom-width: 2px;
  }
  .right {
    grid-row: 1 / 3;
    border-left-width: 2px;
  }
  .bottom {
    grid-column: 1 / 4;
    border-top-width: 2px;
  }
  .area {
    grid-column: 2;
    grid-row: 2;
    display: flex;
    align-items: center;
    justify-content: center;
    padding-bottom: 10px;
  }
  span {
    width: 34px;
    font-weight: 300;
    font-size: 34px;
    line-height: 36px;
    word-break: break-all;
  }
`;

const Group = styled.div`
  margin: 17px 1px 2px;
  padding: 18px 20px 14px 15px;
  border: 1px solid #b7b2a2;
  border-radius: 6px;
`;

const CheckRow = styled.div`
  display: grid;
  grid-template-columns: 228px 228px;
  padding-left: 13px;
`;

const RadioGroup = styled.div`
  display: grid;
  grid-template-columns: repeat(3, 1fr);
  margin-top: 24px;
  padding: 24px 0 16px 9px;
  border: 1px solid #b7b2a2;
  border-radius: 6px;
`;

const Choice = styled.label`
  display: flex;
  align-items: center;
  white-space: nowrap;
  color: ${(props) => props.$disabled && '#a8a8a8'};
  input {
    appearance: none;
    display: flex;
    justify-content: center;
    align-items: center;
    flex: none;
    border: 1px solid #8a8f94;
    background: #fff;
  }
  input[type='checkbox'] {
    width: 16px;
    height: 16px;
    margin-right: 6px;
  }
  input[type='checkbox']:checked::after {
    content: '';
    width: 6px;
    height: 11px;
    margin-bottom: 3px;
    border: solid #000;
    border-width: 0 3px 3px 0;
    transform: rotate(40deg);
  }
  input[type='radio'] {
    width: 19px;
    height: 19px;
    margin-right: 3px;
    border-radius: 50%;
    background: linear-gradient(135deg, #ddd, #fff 60%);
  }
  input[type='radio']:checked::after {
    content: '';
    width: 8px;
    height: 8px;
    border-radius: 50%;
    background: #d92410;
  }
  input:disabled {
    border-color: #d4d4d4;
    background: #ececec;
  }
`;

const DialogFooter = styled.footer`
  display: flex;
  justify-content: flex-end;
  gap: 34px;
  padding: 12px 24px 13px;
  border-top: 1px solid #fff;
`;

const DialogButton = styled.button`
  position: relative;
  display: flex;
  align-items: center;
  gap: 6px;
  width: 110px;
  height: 35px;
  padding-left: 19px;
  border: 2px solid ${(props) => (props.$primary ? '#7f4a4c' : '#777')};
  border-radius: 4px;
  background: ${(props) =>
    props.$primary ? 'linear-gradient(100deg, #fff, #f1eeea 60%, #f3a9a6)' : 'linear-gradient(#fefefe, #dcdcdc)'};
  box-shadow: ${(props) => props.$primary && 'inset 2px 2px #f08a85, inset -3px -3px #cf1f24'};
  .curl {
    position: absolute;
    right: 0;
    top: 0;
    opacity: 0.7;
  }
`;

const RedBox = styled.div`
  position: absolute;
  left: ${(props) => props.$left}px;
  top: ${(props) => props.$top}px;
  width: ${(props) => props.$width}px;
  height: ${(props) => props.$height}px;
  border: 5px solid #ed1c24;
  border-radius: 2px;
  pointer-events: none;
`;

export default App;
